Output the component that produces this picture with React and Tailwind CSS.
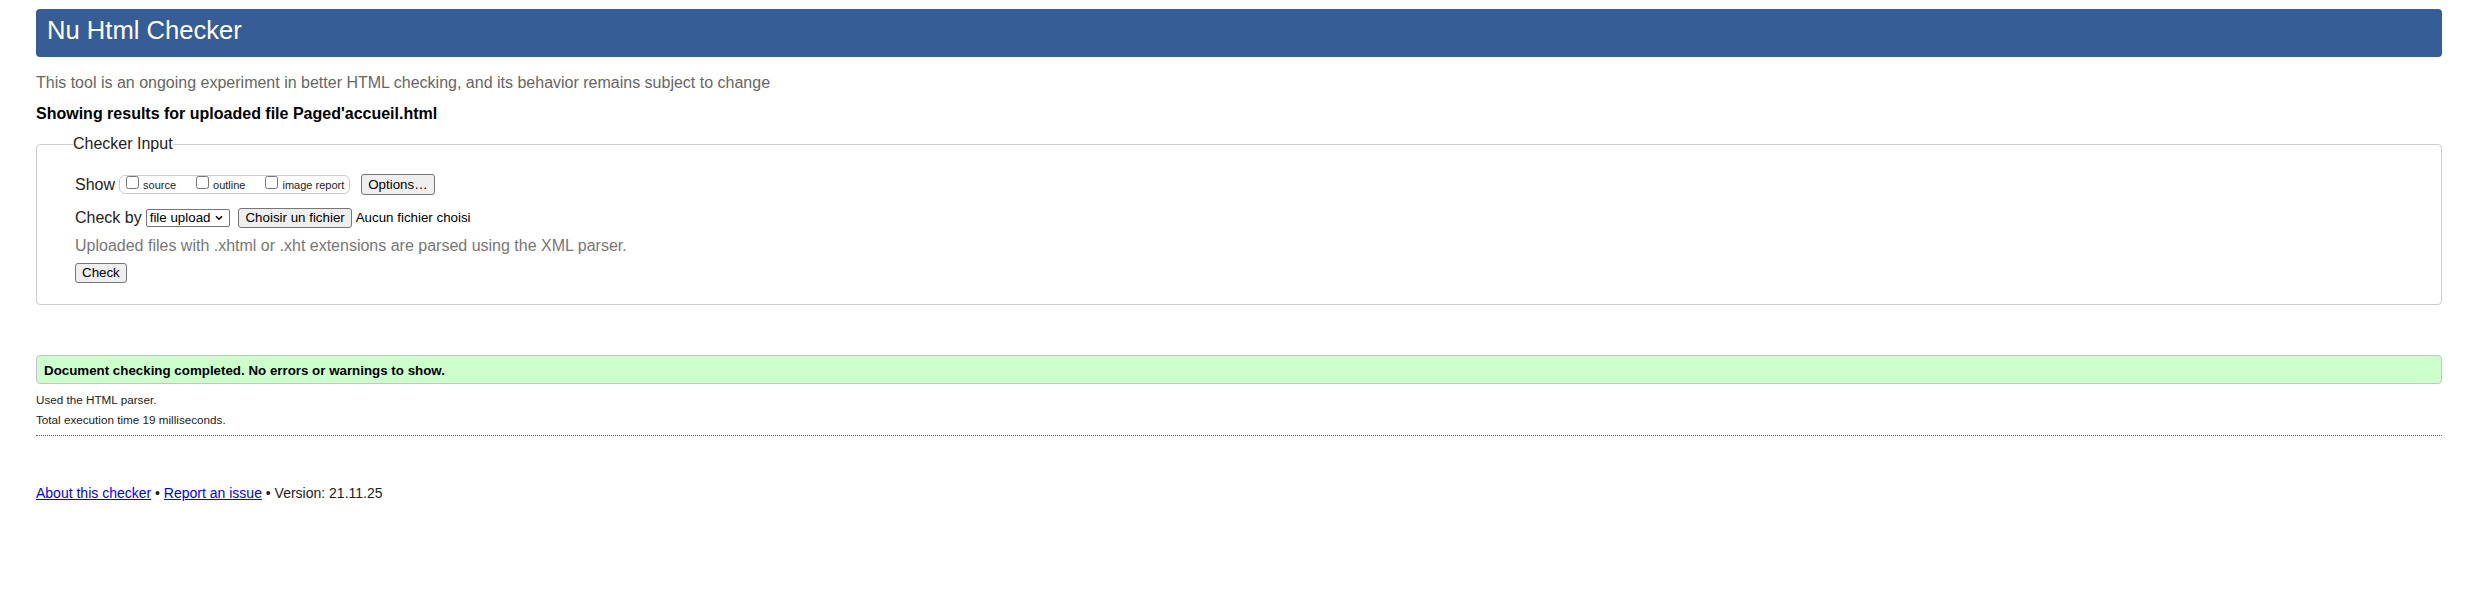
import React from 'react';

const ShowOption = ({ label }) => (
  <label className="flex items-start">
    <input type="checkbox" className="m-0 h-[13px] w-[13px]" />
    <span className="ml-[4px] pt-[3px] text-[11px] leading-[13px] text-[#222]">{label}</span>
  </label>
);

const Btn = ({ children, h = 'h-[21px]' }) => (
  <button className={`${h} rounded-[3px] border border-[#767676] bg-[#efefef] px-[6px] text-[13.33px] leading-none text-black`}>
    {children}
  </button>
);

const App = () => {
  return (
    <div className="min-h-[602px] bg-white px-[36px] pt-[9px] font-['Liberation_Sans',Arial,sans-serif] text-[#222]">
      {/* header */}
      <h1 className="h-[48px] rounded-[4px] bg-[#365d95] px-[11px] pt-[7px] text-[25.6px] font-normal leading-[29px] text-white">
        Nu Html Checker
      </h1>

      <p className="mt-[17px] text-[16px] leading-[18px] text-[#666]">
        This tool is an ongoing experiment in better HTML checking, and its behavior remains subject to change
      </p>
      <p className="mt-[13px] text-[16px] font-bold leading-[18px] text-black">
        Showing results for uploaded file Paged'accueil.html
      </p>

      {/* checker input */}
      <fieldset className="mt-[12px] rounded-[4px] border border-[#ccc] pb-[21px] pl-[38px] pr-[12px] pt-[21px]">
        <legend className="-ml-[2px] p-0 text-[16px] leading-[18px] text-[#222]">Checker Input</legend>

        <div className="flex h-[21px] items-center">
          <span className="text-[16px] leading-[18px]">Show</span>
          <div className="ml-[4px] flex h-[19px] items-start gap-[20px] rounded-[6px] border border-[#ccc] pl-[6px] pr-[5px]">
            <ShowOption label="source" />
            <ShowOption label="outline" />
            <ShowOption label="image report" />
          </div>
          <div className="ml-[11px] flex">
            <Btn>Options…</Btn>
          </div>
        </div>

        <div className="mt-[13px] flex h-[20px] items-center">
          <span className="text-[16px] leading-[18px]">Check by</span>
          <div className="ml-[4px] flex h-[18px] items-center rounded-[2px] border border-[#767676] pl-[3px] pr-[6px] text-[13.33px] leading-none text-black">
            file upload
            <svg className="ml-[5px]" width="8" height="6" viewBox="0 0 8 6">
              <path d="M1 1.2l3 3 3-3" fill="none" stroke="#000" strokeWidth="1.6" />
            </svg>
          </div>
          <div className="ml-[8px] flex">
            <Btn h="h-[20px]">Choisir un fichier</Btn>
          </div>
          <span className="ml-[4px] text-[13.33px] text-black">Aucun fichier choisi</span>
        </div>

        <p className="mt-[9px] text-[16px] leading-[18px] text-[#777]">
          Uploaded files with .xhtml or .xht extensions are parsed using the XML parser.
        </p>

        <div className="mt-[8px] flex">
          <Btn h="h-[20px]">Check</Btn>
        </div>
      </fieldset>

      {/* result */}
      <div className="mt-[50px] flex h-[29px] items-center rounded-[4px] border border-[#c4c4c4] bg-[#ccffcc] pl-[7px] pt-[1px]">
        <p className="text-[13.33px] font-bold leading-[15px] text-black">
          Document checking completed. No errors or warnings to show.
        </p>
      </div>

      <p className="mt-[9px] text-[11.7px] leading-[14px] text-[#222]">Used the HTML parser.</p>
      <p className="mt-[6px] text-[11.7px] leading-[14px] text-[#222]">Total execution time 19 milliseconds.</p>

      <hr className="mt-[8px] border-0 border-t border-dotted border-[#666]" />

      <p className="mt-[49px] text-[14px] leading-[16px] text-[#222]">
        <a href="#" className="text-[#0000ee] underline">About this checker</a>
        {' • '}
        <a href="#" className="text-[#0000ee] underline">Report an issue</a>
        {' • Version: 21.11.25'}
      </p>
    </div>
  );
};

export default App;
